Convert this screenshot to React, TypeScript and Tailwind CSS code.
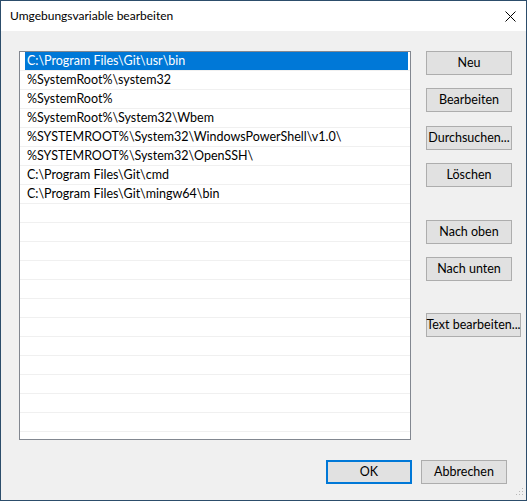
import React from "react";

const items = [
  "C:\\Program Files\\Git\\usr\\bin",
  "%SystemRoot%\\system32",
  "%SystemRoot%",
  "%SystemRoot%\\System32\\Wbem",
  "%SYSTEMROOT%\\System32\\WindowsPowerShell\\v1.0\\",
  "%SYSTEMROOT%\\System32\\OpenSSH\\",
  "C:\\Program Files\\Git\\cmd",
  "C:\\Program Files\\Git\\mingw64\\bin",
];

const rows = Array.from({ length: 21 }, (_, i) => items[i] ?? "");

function Btn({ label, className = "" }: { label: string; className?: string }) {
  return (
    <div
      className={`h-[24px] flex items-center justify-center bg-[#e1e1e1] border border-[#adadad] text-[12.5px] text-black whitespace-nowrap ${className}`}
    >
      {label}
    </div>
  );
}

export default function App() {
  return (
    <div
      className="relative w-[527px] h-[501px] border border-[#2c4d6b] bg-[#f0f0f0] flex flex-col overflow-hidden"
      style={{ fontFamily: 'Lato, "Noto Sans", sans-serif' }}
    >
      <div className="h-[30px] bg-white flex items-center pl-[9px] pr-[10px] shrink-0">
        <span className="text-[12px] text-black flex-1">Umgebungsvariable bearbeiten</span>
        <svg width="11" height="11" viewBox="0 0 11 11">
          <path d="M0.5 0.5 L10.5 10.5 M10.5 0.5 L0.5 10.5" stroke="#000" strokeWidth="1" fill="none" />
        </svg>
      </div>
      <div className="flex pl-[18px] pt-[20px]">
        <div className="w-[392px] h-[389px] border border-[#828790] bg-white overflow-hidden flex flex-col">
          {rows.map((t, i) => (
            <div key={i} className="h-[19px] shrink-0 border-b border-[#f0f0f0] flex">
              <div
                className={`ml-[5px] mr-[2px] flex-1 h-[18px] flex items-center pl-[2px] text-[12.5px] whitespace-nowrap ${
                  i === 0 ? "bg-[#0078d7] text-white" : "text-black"
                }`}
              >
                {t}
              </div>
            </div>
          ))}
        </div>
        <div className="ml-[15px] flex flex-col items-start">
          <Btn label="Neu" className="w-[86px]" />
          <Btn label="Bearbeiten" className="w-[86px] mt-[13px]" />
          <Btn label="Durchsuchen..." className="w-[86px] mt-[14px]" />
          <Btn label="Löschen" className="w-[86px] mt-[13px]" />
          <Btn label="Nach oben" className="w-[86px] mt-[33px]" />
          <Btn label="Nach unten" className="w-[86px] mt-[13px]" />
          <Btn label="Text bearbeiten..." className="w-[95px] mt-[32px]" />
        </div>
      </div>
      <div className="flex justify-end pr-[19px] mt-[20px] gap-[9px]">
        <div className="w-[86px] h-[24px] flex items-center justify-center bg-[#e1e1e1] border-2 border-[#0078d7] text-[12.5px] text-black">
          OK
        </div>
        <Btn label="Abbrechen" className="w-[86px]" />
      </div>
      <svg width="10" height="10" viewBox="0 0 10 10" className="absolute right-[2px] bottom-[2px]">
        <rect x="8" y="0" width="1" height="1" fill="#b8b8b8" />
        <rect x="5" y="3" width="1" height="1" fill="#b8b8b8" />
        <rect x="8" y="3" width="1" height="1" fill="#b8b8b8" />
        <rect x="2" y="6" width="1" height="1" fill="#b8b8b8" />
        <rect x="5" y="6" width="1" height="1" fill="#b8b8b8" />
        <rect x="8" y="6" width="1" height="1" fill="#b8b8b8" />
      </svg>
    </div>
  );
}
